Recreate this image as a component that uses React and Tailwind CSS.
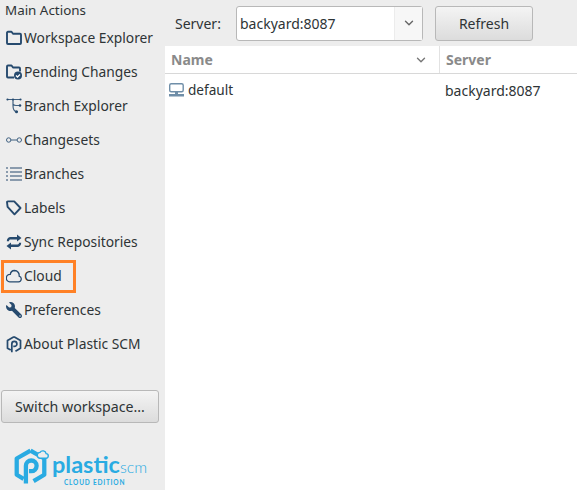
import { ChevronDown } from "lucide-react";
import { FaWrench } from "react-icons/fa";

const NAVY = "#264a6e";

function FolderIcon() {
  return (
    <svg width="16" height="16" viewBox="0 0 16 16" fill="none" stroke={NAVY} strokeWidth="1.9">
      <path d="M1 2.800c0-.6.4-1 1-1h3.500l1.500 2h7c.6 0 1 .4 1 1V13c0 .6-.4 1-1 1H2c-.6 0-1-.4-1-1z" strokeLinejoin="round" />
    </svg>
  );
}

function PendingIcon() {
  return (
    <svg width="16" height="16" viewBox="0 0 16 16" fill="none">
      <path d="M1 2.500c0-.6.4-1 1-1h3.500l1.500 2h6c.6 0 1 .4 1 1v3M8 13.500H2c-.6 0-1-.4-1-1V2.500" stroke={NAVY} strokeWidth="1.900" strokeLinejoin="round" />
      <circle cx="12" cy="11.500" r="4" fill={NAVY} />
      <path d="M10 11.500l1.500 1.500 2.500-2.500" stroke="#fff" strokeWidth="1.300" />
    </svg>
  );
}

function BranchIcon() {
  return (
    <svg width="16" height="16" viewBox="0 0 16 16" fill="none" stroke="#3f6080" strokeWidth="1.200">
      <path d="M1 1.500h14M7 1.500v6c0 3 1 6 3.500 6h1.500M7 6c.5 1.500 2 1.500 3 1.500h3.500" />
      <circle cx="1.500" cy="1.500" r="1.100" fill={NAVY} stroke="none" />
      <circle cx="7" cy="1.500" r="1.100" fill={NAVY} stroke="none" />
      <circle cx="14.500" cy="1.500" r="1.100" fill={NAVY} stroke="none" />
      <circle cx="14" cy="7.500" r="1.300" fill={NAVY} stroke="none" />
      <circle cx="10.500" cy="13.800" r="1.500" fill={NAVY} stroke="none" />
    </svg>
  );
}

function ChangesetIcon() {
  return (
    <svg width="16" height="16" viewBox="0 0 16 16" fill="none" stroke="#3f6080" strokeWidth="1">
      <circle cx="2.700" cy="8" r="2.200" />
      <circle cx="13.300" cy="8" r="2.200" />
      <path d="M5 8h6" />
    </svg>
  );
}

function BranchesIcon() {
  return (
    <svg width="16" height="16" viewBox="0 0 16 16" fill="#8a9bad">
      <rect x="0" y="1" width="2" height="2" />
      <rect x="0" y="5" width="2" height="2" />
      <rect x="0" y="9" width="2" height="2" />
      <rect x="0" y="13" width="2" height="2" />
      <rect x="4" y="1" width="12" height="2" />
      <rect x="4" y="5" width="12" height="2" />
      <rect x="4" y="9" width="12" height="2" />
      <rect x="4" y="13" width="12" height="2" />
    </svg>
  );
}

function LabelIcon() {
  return (
    <svg width="16" height="16" viewBox="0 0 16 16" fill="none" stroke={NAVY} strokeWidth="1.900">
      <path d="M1 2.200c0-.5.3-.8.8-.8h6.400l6.300 6.600-6 6.300-6.900-7.500z" strokeLinejoin="round" />
    </svg>
  );
}

function SyncIcon() {
  return (
    <svg width="16" height="16" viewBox="0 0 16 16" fill={NAVY}>
      <path d="M11 .500l4.500 3.500L11 7.500V5.500H4.500c-1 0-1.500.6-1.500 1.700H.8C.8 4.800 2.400 3 4.500 3H11z" />
      <path d="M5 15.500L.5 12 5 8.500v2h6.500c1 0 1.500-.6 1.500-1.700h2.200c0 2.400-1.600 4.200-3.700 4.200H5z" />
    </svg>
  );
}

function CloudIcon() {
  return (
    <svg width="16" height="16" viewBox="0 0 16 16" fill="none" stroke={NAVY} strokeWidth="1.300">
      <path d="M3.800 13.800h8.700a2.900 2.900 0 0 0 .6-5.700 4.700 4.700 0 0 0-4.600-5.600A4.500 4.500 0 0 0 4.300 6.400a3.700 3.700 0 0 0-.5 7.400z" strokeLinejoin="round" />
    </svg>
  );
}

function HexLogo({ width, height, color, stroke, cloud }) {
  return (
    <svg width={width} height={height} viewBox="2 0.500 20 23.500" fill="none" stroke={color} strokeWidth={stroke} strokeLinejoin="round" className="shrink-0 overflow-visible">
      <path d="M12 1.500L21 6.700v10.600L14 21.500" />
      <path d="M12 1.500L3 6.700v10.600l4.500 2.700" />
      <path d="M9 23V11.500a3.500 3.500 0 1 1 3.500 3.500H11" />
      {cloud && (
        <path d="M18.500 6.500h3.500a1.500 1.500 0 0 0 .2-3 2.200 2.200 0 0 0-4-.8 1.900 1.900 0 0 0 .3 3.800z" fill="#ededed" strokeWidth="0.900" />
      )}
    </svg>
  );
}

const navItems = [
  { label: "Workspace Explorer", icon: <FolderIcon /> },
  { label: "Pending Changes", icon: <PendingIcon /> },
  { label: "Branch Explorer", icon: <BranchIcon /> },
  { label: "Changesets", icon: <ChangesetIcon /> },
  { label: "Branches", icon: <BranchesIcon /> },
  { label: "Labels", icon: <LabelIcon /> },
  { label: "Sync Repositories", icon: <SyncIcon /> },
  { label: "Cloud", icon: <CloudIcon />, highlight: true },
  { label: "Preferences", icon: <FaWrench size={16} color={NAVY} className="-scale-x-100" /> },
  { label: "About Plastic SCM", icon: <HexLogo width={16} height={17} color={NAVY} stroke={2.400} /> },
];

function NavRow({ item }) {
  return (
    <div className="relative flex h-[34px] items-center gap-[2px] pl-[6px] text-[13.8px]">
      {item.icon}
      <span>{item.label}</span>
      {item.highlight && (
        <div className="absolute left-[1px] top-[1px] h-[33px] w-[75px] border-[3px] border-[#ff8126]" />
      )}
    </div>
  );
}

export default function App() {
  return (
    <div className="flex h-[490px] w-[577px] overflow-hidden bg-[#ededed] font-['Noto_Sans',sans-serif] text-[14px] text-[#2e3436]">
      <aside className="flex w-[165px] shrink-0 flex-col">
        <div className="flex h-[21px] items-center pl-[5px] text-[13.4px]">Main Actions</div>
        {navItems.map((item) => (
          <NavRow key={item.label} item={item} />
        ))}
        <div className="mx-[1px] mt-[29px] flex h-[33px] w-[158px] items-center justify-center rounded-[3px] border border-[#b8b8b8] bg-gradient-to-b from-[#f4f4f4] to-[#dcdcdc] text-[14.200px]">
          Switch workspace...
        </div>
        <div className="ml-[15px] mt-[26px] flex items-start text-[#29abe2]">
          <HexLogo width={31} height={36} color="#29abe2" stroke={2.800} cloud />
          <div className="ml-[6px] flex flex-col pt-[3px]">
            <div className="flex items-baseline leading-[24px]">
              <span className="font-['Lato',sans-serif] text-[23.500px] font-bold">plastic</span>
              <span className="font-['Lato',sans-serif] text-[16px] font-light">scm</span>
            </div>
            <span className="ml-[12px] font-['Lato',sans-serif] text-[6.500px] font-bold leading-[8px] tracking-[0.8px]">CLOUD EDITION</span>
          </div>
        </div>
      </aside>

      <main className="flex min-w-0 flex-1 flex-col">
        <div className="flex h-[46px] items-center pl-[10px]">
          <span className="w-[61px]">Server:</span>
          <div className="flex h-[35px] w-[187px] items-center rounded-[3px] border border-[#b8b8b8] bg-white pl-[3px]">
            <span className="flex-1">backyard:8087</span>
            <div className="flex h-full w-[28px] items-center justify-center border-l border-[#ececec] bg-[#f7f7f7]">
              <ChevronDown size={14} strokeWidth={2.400} color="#666" />
            </div>
          </div>
          <div className="ml-[12px] flex h-[35px] w-[98px] items-center justify-center rounded-[3px] border border-[#b8b8b8] bg-gradient-to-b from-[#f4f4f4] to-[#dcdcdc]">
            Refresh
          </div>
        </div>
        <div className="flex-1 bg-white">
          <div className="flex h-[28px] border-b border-[#d8d8d8] font-bold text-[#8a8a8a]">
            <div className="flex w-[275px] items-center border-r border-[#e2e2e2] pl-[6px] pr-[11px]">
              <span className="flex-1">Name</span>
              <ChevronDown size={14} strokeWidth={2.400} color="#777" />
            </div>
            <div className="flex items-center pl-[6px]">Server</div>
          </div>
          <div className="flex h-[32px] items-center">
            <div className="flex w-[275px] items-center gap-[3px] pl-[3px]">
              <svg width="17" height="16" viewBox="0 0 17 16" fill="none">
                <rect x="1.700" y="1.700" width="13.500" height="8" rx="1.500" stroke="#6f8ea8" strokeWidth="1.400" />
                <rect x="7" y="10" width="3" height="2" fill="#6f8ea8" />
                <rect x="1" y="12" width="15" height="2.500" fill="#6f8ea8" />
              </svg>
              <span className="text-[13.600px]">default</span>
            </div>
            <span className="pl-[5px]">backyard:8087</span>
          </div>
        </div>
      </main>
    </div>
  );
}
